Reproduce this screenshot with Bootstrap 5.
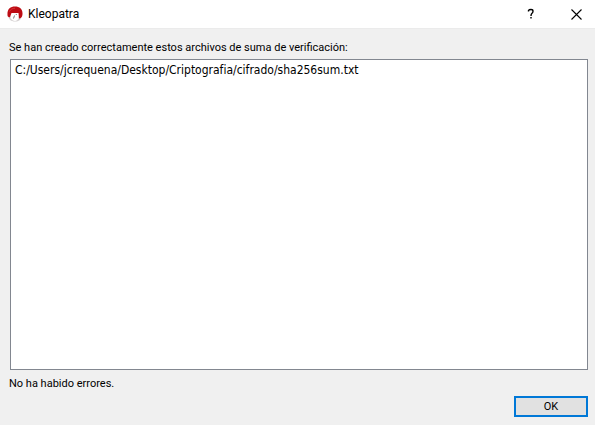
<!DOCTYPE html>
<html lang="es">
<head>
<meta charset="utf-8">
<meta name="viewport" content="width=device-width, initial-scale=1">
<title>Kleopatra</title>
<link href="https://cdn.jsdelivr.net/npm/bootstrap@5.3.0/dist/css/bootstrap.min.css" rel="stylesheet">
<style>
  body { font-family: Roboto, "Open Sans", sans-serif; font-size: 11px; line-height: 16px; color: #000; background: #f0f0f0; }
  .title-bar { height: 29px; border-bottom: 1px solid #ebebeb; padding-left: 7px; font-size: 12px; }
  .title-text { margin-left: 5px; }
  .window-btn { width: 45px; height: 28px; color: #000; }
  .help-btn { padding-left: 6px; }
  .close-btn { padding-left: 7px; }
  .dialog-body { padding: 11px 7px 8px 9px; }
  .file-list { border: 1px solid #828790; margin: 3px 0 6px 1px; padding: 2px 4px; font-family: "DejaVu Sans Condensed", "Noto Sans", sans-serif; font-size: 12px; }
  .ok-btn { width: 74px; height: 21px; border: 2px solid #0078d7; background: #e1e1e1; margin-top: 4px; font-size: 11px; line-height: 16px; }
</style>
</head>
<body>
<main class="d-flex flex-column vh-100">
  <header class="title-bar d-flex align-items-center bg-white">
    <svg width="16" height="16" viewBox="0 0 16 16" aria-hidden="true">
      <path d="M1 9C1.500 13.500 4 15.500 8 15.500s6-2 6.500-5z" fill="#d6d2d2"/>
      <path d="M3.500 7h8v5.500c-.8 1.500-2 2.500-3.500 2.500s-3.500-1-4.500-3z" fill="#fff"/>
      <path d="M.600 10C-.300 3.500 3 .500 8 .500s8.200 3 7.400 8.500c-.3 2-1.500 3.500-3.400 3.500L11.500 7H4.500L3 11C2 11.500 1 11 .600 10z" fill="#bd0c14"/>
      <path d="M2.500 5.500c1-2 3-3.300 5.500-3.300" fill="none" stroke="#d8343a"/>
      <path d="M7.500 9.500L6.500 12.500M8.800 8.500h1" fill="none" stroke="#555" stroke-width=".8"/>
    </svg>
    <span class="title-text flex-grow-1">Kleopatra</span>
    <button type="button" class="window-btn help-btn btn rounded-0 border-0 py-0 pe-0 d-flex align-items-center justify-content-center" aria-label="Ayuda">
      <svg width="8" height="12" viewBox="0 0 8 12" aria-hidden="true"><path d="M1.500 3.500V2.500Q2 1.500 4 1.500Q6 1.500 6 3.200Q6 4.500 4.800 5.500Q4 6.200 4 8M4 9v1.500" fill="none" stroke="#000" stroke-width="1.400"/></svg>
    </button>
    <button type="button" class="window-btn close-btn btn rounded-0 border-0 py-0 pe-0 d-flex align-items-center justify-content-center" aria-label="Cerrar">
      <svg width="11" height="11" viewBox="0 0 11 11" aria-hidden="true"><path d="M.500.500l10 10M10.500.500l-10 10" stroke="#000" stroke-width="1.100"/></svg>
    </button>
  </header>
  <section class="dialog-body d-flex flex-column flex-grow-1">
    <div id="files-label">Se han creado correctamente estos archivos de suma de verificación:</div>
    <ul class="file-list list-unstyled bg-white flex-grow-1" aria-labelledby="files-label">
      <li>C:/Users/jcrequena/Desktop/Criptografia/cifrado/sha256sum.txt</li>
    </ul>
    <div>No ha habido errores.</div>
    <div class="d-flex justify-content-end">
      <button type="button" class="ok-btn btn rounded-0 p-0 d-flex align-items-center justify-content-center text-black">OK</button>
    </div>
  </section>
</main>
<script src="https://cdn.jsdelivr.net/npm/bootstrap@5.3.0/dist/js/bootstrap.bundle.min.js"></script>
</body>
</html>
